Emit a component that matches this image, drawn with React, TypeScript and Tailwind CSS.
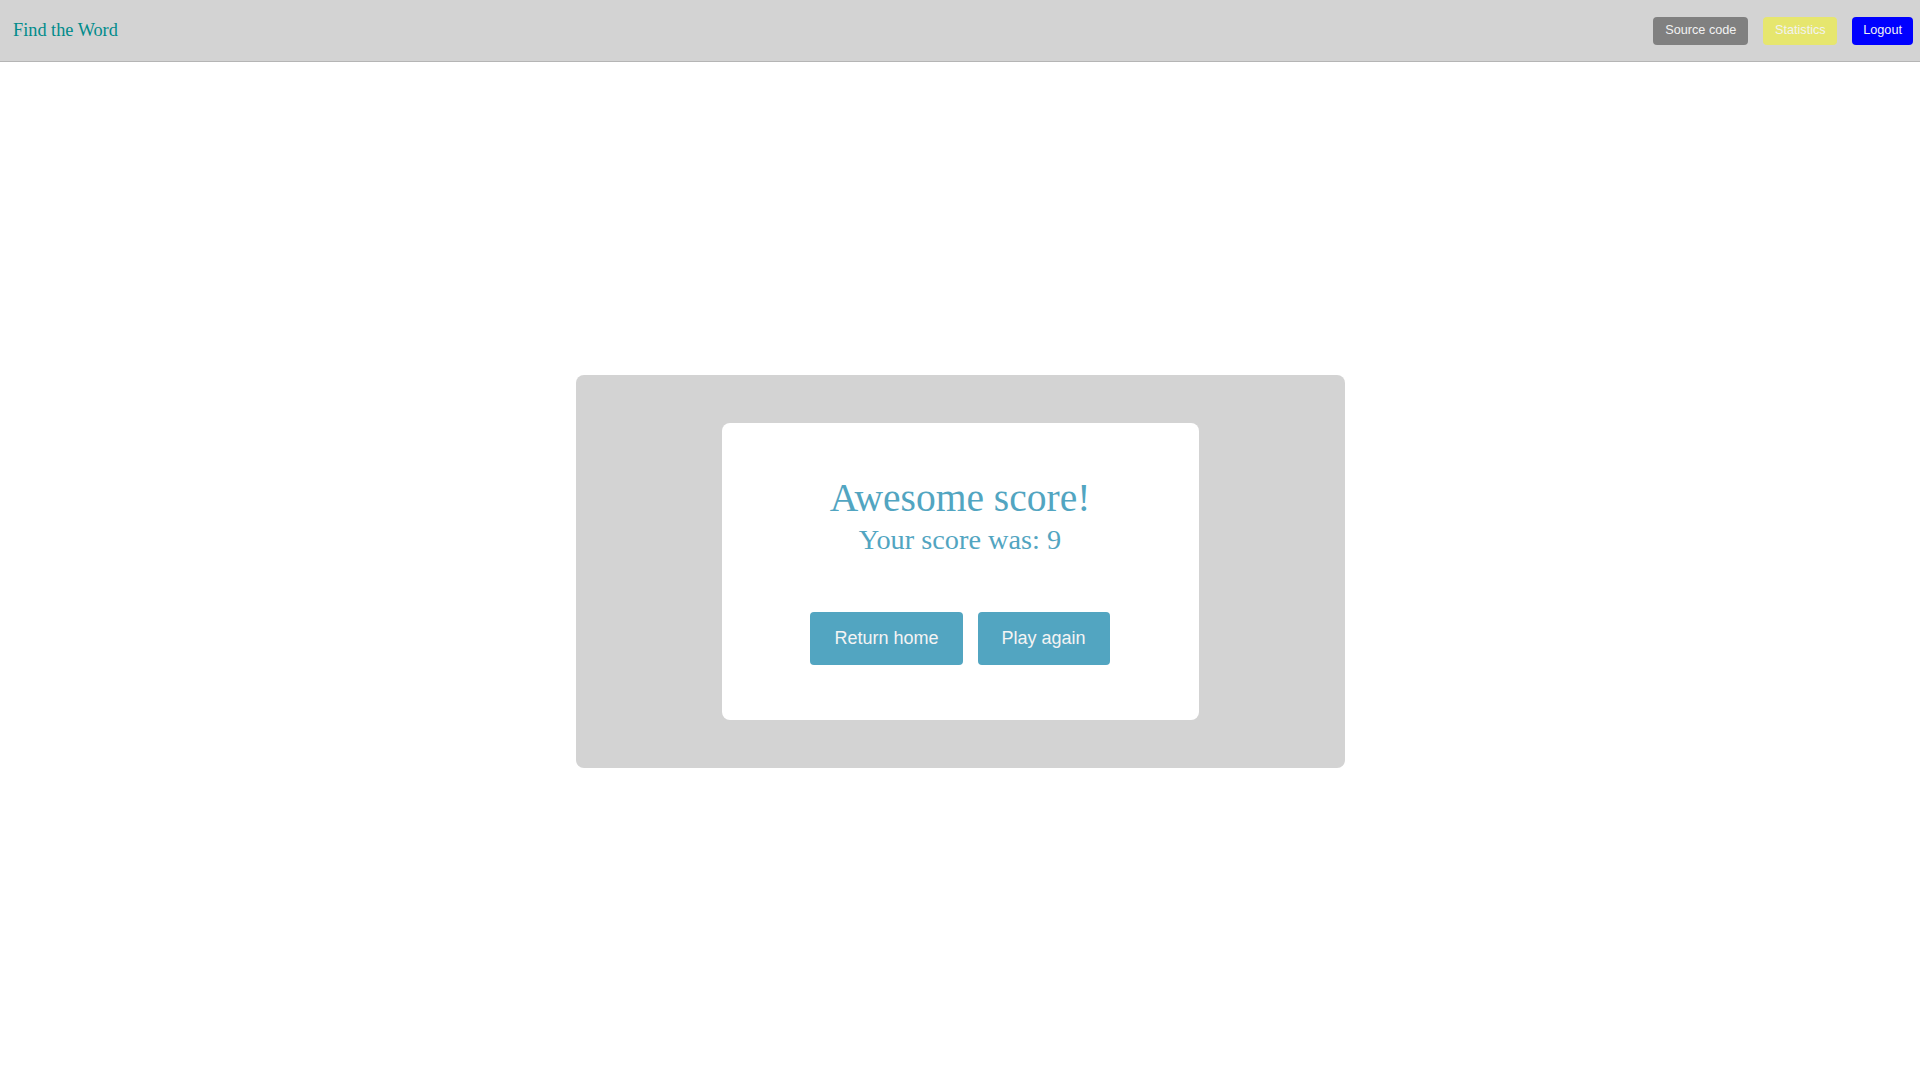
export default function App() {
  return (
    <div className="min-h-screen flex flex-col bg-white">
      {/* header */}
      <header className="h-[62px] flex items-center justify-between bg-[#d3d3d3] border-b border-[#b5b5b5] pl-[13px] pr-[7px]">
        <span className="text-[18.3px] text-[#008b8b] font-['Liberation_Serif',serif]">Find the Word</span>
        <div className="flex items-center gap-[15px] font-['Liberation_Sans',Arial,sans-serif] text-[12.7px] text-[#f2f2f2]">
          <button className="px-3 h-[28px] rounded bg-[#808080]">Source code</button>
          <button className="px-[11.5px] h-[28px] rounded bg-[#e6e66e]">Statistics</button>
          <button className="px-[11px] h-[28px] rounded bg-[#0000ff]">Logout</button>
        </div>
      </header>

      {/* result */}
      <main className="flex-1 flex items-center justify-center">
        <div className="w-[769px] py-[48px] rounded-lg bg-[#d3d3d3] flex justify-center">
          <div className="w-[477px] h-[297px] rounded-lg bg-white flex flex-col items-center pt-[53px]">
            <h1 className="text-[39.5px] leading-[44px] text-[#52a5c1] font-['Liberation_Serif',serif]">Awesome score!</h1>
            <p className="mt-[4px] text-[28.3px] leading-[32px] text-[#52a5c1] font-['Liberation_Serif',serif]">Your score was: 9</p>
            <div className="mt-[56px] flex gap-[15px] font-['Liberation_Sans',Arial,sans-serif] text-[18px] text-[#f4f4f4]">
              <button className="h-[53px] px-6 rounded bg-[#52a5c1]">Return home</button>
              <button className="h-[53px] px-6 rounded bg-[#52a5c1]">Play again</button>
            </div>
          </div>
        </div>
      </main>
    </div>
  );
}
